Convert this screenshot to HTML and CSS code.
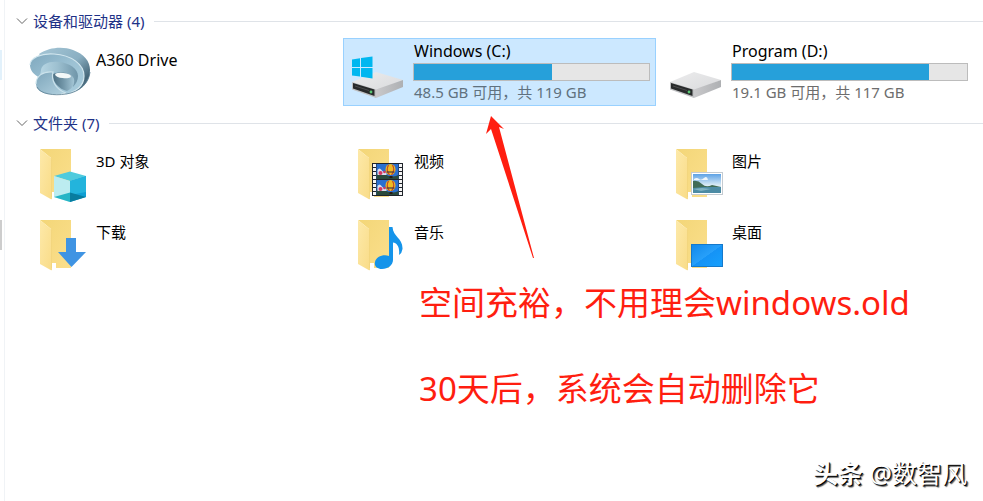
FILE: index.html
```html
<!DOCTYPE html>
<html lang="zh-CN">
<head>
<meta charset="utf-8">
<meta name="viewport" content="width=device-width, initial-scale=1">
<title>此电脑</title>
<link rel="stylesheet" href="styles.css">
</head>
<body>
<svg class="defs" aria-hidden="true">
  <defs>
    <linearGradient id="back" x1="0" y1="0" x2="1" y2="1"><stop offset="0" stop-color="#f3d678"/><stop offset="1" stop-color="#fbdf8c"/></linearGradient>
    <linearGradient id="flap" x1="0" y1="0" x2="1" y2="1"><stop offset="0" stop-color="#fde9a9"/><stop offset="1" stop-color="#f9dc88"/></linearGradient>
    <linearGradient id="metal" x1="0" y1="0" x2="1" y2="0"><stop offset="0" stop-color="#c9c9cb"/><stop offset="1" stop-color="#aeb0b3"/></linearGradient>
    <linearGradient id="lid" x1="0" y1="0" x2="1" y2="1"><stop offset="0" stop-color="#ececed"/><stop offset="1" stop-color="#d9dadc"/></linearGradient>
    <linearGradient id="wall" x1="0" y1="0" x2="1" y2="1"><stop offset="0" stop-color="#a5c6d6"/><stop offset=".5" stop-color="#8aafc2"/><stop offset=".8" stop-color="#456678"/><stop offset="1" stop-color="#6c8fa2"/></linearGradient>
    <linearGradient id="disc" x1="0" y1="0" x2="1" y2="1"><stop offset="0" stop-color="#7fa8be"/><stop offset=".5" stop-color="#9cc1d3"/><stop offset="1" stop-color="#a9cddd"/></linearGradient>
    <linearGradient id="tube" x1="0" y1="0" x2="1" y2="0"><stop offset="0" stop-color="#bcdae7"/><stop offset=".5" stop-color="#9dc0d0"/><stop offset="1" stop-color="#6f95a9"/></linearGradient>
    <linearGradient id="loop" x1="0" y1="0" x2="1" y2="1"><stop offset="0" stop-color="#7ea6bb"/><stop offset="1" stop-color="#b3d2e0"/></linearGradient>
    <linearGradient id="bowl" x1="0" y1="0" x2="1" y2="0"><stop offset="0" stop-color="#4d7083"/><stop offset=".5" stop-color="#7397a9"/><stop offset="1" stop-color="#a4c6d6"/></linearGradient>
    <linearGradient id="screen" x1="0" y1="0" x2="1" y2="1"><stop offset="0" stop-color="#1188ea"/><stop offset=".5" stop-color="#27a0fa"/><stop offset=".51" stop-color="#1593f6"/><stop offset="1" stop-color="#16a0fd"/></linearGradient>
    <linearGradient id="sky" x1="0" y1="0" x2="0" y2="1"><stop offset="0" stop-color="#5da2e6"/><stop offset=".6" stop-color="#dcecf6"/></linearGradient>
    <g id="folder">
      <path d="M15 9H46V57H26V18Z" fill="url(#back)"/>
      <path d="M15 9L26.500 18.500V59.500L15 53Z" fill="url(#flap)"/>
      <path d="M26.500 18.500V59" stroke="#f0d27a" stroke-width=".7"/>
      <path d="M27 52H31V60H27Z" fill="#fff"/>
    </g>
    <g id="disk">
      <path d="M9 44L33 34L60 42L33 53Z" fill="url(#lid)"/>
      <path d="M33 51.500L60 42V49L33 60Z" fill="url(#metal)"/>
      <path d="M9 44L33 51.500V60L9 51.500Z" fill="#bfc0c2"/>
      <path d="M10 45L31.500 51.500V58L10 50.500Z" fill="#282a2b"/>
      <path d="M12 48L26 52.500" stroke="#4b4c4d"/>
      <circle cx="28" cy="54" r="1.400" fill="#58c873"/>
    </g>
    <g id="balloons">
      <rect width="22" height="15" fill="#2a6fd0"/>
      <path d="M0 10Q5 8 10 11T22 11V15H0Z" fill="#2a4a3c"/>
      <path d="M1 6q2-3 4 0t5 2v3H1z" fill="#dbe0f0"/>
      <circle cx="4" cy="9" r="2" fill="#d43860"/>
      <circle cx="8" cy="8" r="1.300" fill="#d43860"/>
      <ellipse cx="14" cy="5.500" rx="5" ry="5.500" fill="#efbb22"/>
      <path d="M12 1Q9 6 13 11M16 1Q19 6 15 11" fill="none" stroke="#c2442a" stroke-width="1.200"/>
      <path d="M10 8H18" stroke="#4a3a40" stroke-width="1.200"/>
      <rect x="13" y="12" width="3" height="2" fill="#281812"/>
    </g>
  </defs>
</svg>

<main class="explorer">
  <span class="rail-mark rail-mark--hover"></span>
  <span class="rail-mark rail-mark--scroll"></span>

  <section class="group">
    <h2 class="group-head">
      <button class="group-toggle" type="button" aria-expanded="true">
        <svg class="chevron" viewBox="0 0 12 8" aria-hidden="true"><path d="M1 1.500L6 6.500L11 1.500"/></svg>
        <span>设备和驱动器 (4)</span>
      </button>
    </h2>
    <div class="tiles">
      <button class="tile" type="button">
        <svg class="tile-icon" viewBox="0 0 70 68" aria-hidden="true">
          <path d="M14 16C24 9 38 8 48 12C59 16 65 23 65 32C65 43 58 52 45 55L30 40Z" fill="url(#wall)"/>
          <path d="M5 27C5 20 16 15 29 16C46 17 59 26 59 38C59 48 51 54 41 56L15 40C8 36 5 32 5 27Z" fill="url(#disc)"/>
          <path d="M12 44C13 40 16 36 16 32C17 26 24 23 34 24C45 25 53 31 53 38C53 42 51 46 48 49C50 41 45 35 36 34C26 33 18 37 12 44Z" fill="url(#tube)"/>
          <path d="M28 36C37 32 47 35 49 41C50 46 47 51 42 53C34 51 27 44 28 36Z" fill="url(#bowl)"/>
          <ellipse cx="38" cy="37.500" rx="8" ry="2.600" fill="#f3f8f8" transform="rotate(7 38 37.500)"/>
          <path d="M11 46C11 38 18 33 28 34C26 42 30 51 41 55C30 58 11 57 11 46Z" fill="url(#loop)"/>
          <path d="M41 56C51 54 59 48 59 38C59 26 46 17 29 16C16 15 5 20 5 27" fill="none" stroke="#d3e7ef" stroke-width="1.200"/>
          <path d="M11 46C11 38 18 33 28 34C26 42 30 51 41 55" fill="none" stroke="#cbe2eb" stroke-width="1.200"/>
          <path d="M12 49C15 56 29 58 41 56C55 54 64 45 65 34" fill="none" stroke="#557b8f" stroke-width=".8"/>
        </svg>
        <span class="tile-body"><span class="tile-name tile-name--drive">A360 Drive</span></span>
      </button>
      <button class="tile tile--drive tile--selected" type="button">
        <svg class="tile-icon" viewBox="0 0 70 68" aria-hidden="true">
          <use href="#disk"/>
          <path d="M9 21.500L17 20.300V29H9ZM18 20.100L29.500 18.500V29H18ZM9 30H17V38.500L9 37.500ZM18 30H29.500V40.500L18 38.700Z" fill="#00b7f0"/>
        </svg>
        <span class="tile-body">
          <span class="tile-name tile-name--drive">Windows (C:)</span>
          <span class="usage"><span class="usage-fill" style="width: 58.700%"></span></span>
          <span class="tile-note">48.5 GB 可用，共 119 GB</span>
        </span>
      </button>
      <button class="tile tile--drive" type="button">
        <svg class="tile-icon" viewBox="0 0 70 68" aria-hidden="true"><use href="#disk"/></svg>
        <span class="tile-body">
          <span class="tile-name tile-name--drive">Program (D:)</span>
          <span class="usage"><span class="usage-fill" style="width: 84%"></span></span>
          <span class="tile-note">19.1 GB 可用，共 117 GB</span>
        </span>
      </button>
    </div>
  </section>

  <section class="group">
    <h2 class="group-head">
      <button class="group-toggle" type="button" aria-expanded="true">
        <svg class="chevron" viewBox="0 0 12 8" aria-hidden="true"><path d="M1 1.500L6 6.500L11 1.500"/></svg>
        <span>文件夹 (7)</span>
      </button>
    </h2>
    <div class="tiles tiles--folders">
      <button class="tile" type="button">
        <svg class="tile-icon" viewBox="0 0 70 68" aria-hidden="true">
          <use href="#folder"/>
          <path d="M29 36L45 31.500L61 36L45 41Z" fill="#4fcbdd"/>
          <path d="M29 36L45 41V62L29 57Z" fill="#bcecf0"/>
          <path d="M45 41L61 36V57L45 62Z" fill="#0f9fd3"/>
          <path d="M45 41L61 36V52L45 55Z" fill="#23b4dc"/>
          <path d="M29 57L45 52.500V62Z" fill="#27b5c6"/>
          <path d="M45 52.500L61 57L45 62Z" fill="#087d9f"/>
        </svg>
        <span class="tile-body"><span class="tile-name">3D 对象</span></span>
      </button>
      <button class="tile" type="button">
        <svg class="tile-icon" viewBox="0 0 70 68" aria-hidden="true">
          <use href="#folder"/>
          <rect x="29" y="23" width="31" height="33" fill="#20242b"/>
          <path d="M31.500 24V56M57.500 24V56" stroke="#f4f4f4" stroke-width="3" stroke-dasharray="3 1"/>
          <use href="#balloons" x="33.500" y="24"/>
          <use href="#balloons" x="33.500" y="40"/>
        </svg>
        <span class="tile-body"><span class="tile-name">视频</span></span>
      </button>
      <button class="tile" type="button">
        <svg class="tile-icon" viewBox="0 0 70 68" aria-hidden="true">
          <use href="#folder"/>
          <rect x="30.500" y="32.500" width="31" height="22" fill="#fff" stroke="#c4cbd1"/>
          <rect x="32" y="34" width="28" height="19" fill="url(#sky)"/>
          <path d="M33 39q3-2 5 0t5-1 4 2H33z" fill="#f0f6fa"/>
          <path d="M32 41Q37 40 41 44T51 45L60 47V48H32Z" fill="#416c57"/>
          <path d="M32 48L43 47H60V53H32Z" fill="#4c8ba4"/>
          <path d="M32 49L41 48L50 49L40 51Z" fill="#80b3c3"/>
        </svg>
        <span class="tile-body"><span class="tile-name">图片</span></span>
      </button>
      <button class="tile" type="button">
        <svg class="tile-icon" viewBox="0 0 70 68" aria-hidden="true">
          <use href="#folder"/>
          <path d="M41 27H51V41H61L46.500 56L33 41H41Z" fill="#3f94e3"/>
        </svg>
        <span class="tile-body"><span class="tile-name">下载</span></span>
      </button>
      <button class="tile" type="button">
        <svg class="tile-icon" viewBox="0 0 70 68" aria-hidden="true">
          <use href="#folder"/>
          <path d="M46 16H49.500C50 26 60 27 59.500 38Q59 42 56 44C57 36 54 32 50 31.500V49C50 54 45 58 39 58C34 58 31 55 32 51C33 46 40 43 46 45Z" fill="#1594ea"/>
        </svg>
        <span class="tile-body"><span class="tile-name">音乐</span></span>
      </button>
      <button class="tile" type="button">
        <svg class="tile-icon" viewBox="0 0 70 68" aria-hidden="true">
          <use href="#folder"/>
          <rect x="30.500" y="33.500" width="31" height="22" fill="url(#screen)" stroke="#1579cb"/>
        </svg>
        <span class="tile-body"><span class="tile-name">桌面</span></span>
      </button>
    </div>
  </section>

  <div class="annotation">
    <svg class="arrow" viewBox="0 0 50 146" aria-hidden="true"><path d="M7 3L20 16L15 14L50 145L49 145L7 16L2 21Z"/></svg>
    <p>空间充裕，不用理会windows.old</p>
    <p>30天后，系统会自动删除它</p>
  </div>

  <div class="watermark"><b>头条</b> @数智风</div>
</main>
</body>
</html>
```
FILE: styles.css
```css
* {
  box-sizing: border-box;
}

body {
  margin: 0;
  background: #fff;
  color: #000;
  font-family: "Noto Sans", "Noto Sans CJK SC", sans-serif;
  font-size: 15px;
  line-height: 20px;
}

button {
  margin: 0;
  padding: 0;
  border: 0;
  background: none;
  color: inherit;
  font: inherit;
  text-align: left;
}

.defs {
  position: absolute;
  width: 0;
  height: 0;
}

.explorer {
  position: relative;
  min-height: 100vh;
  margin-left: 4px;
  padding-top: 8px;
  border-left: 1px solid #f0f3f6;
  overflow: hidden;
}

.rail-mark {
  position: fixed;
  left: 0;
  width: 2px;
  height: 30px;
}

.rail-mark--hover {
  top: 50px;
  background: #e2f1fb;
}

.rail-mark--scroll {
  top: 220px;
  background: #cdcdcd;
}

.group {
  margin-bottom: 4px;
}

.group-head {
  display: flex;
  align-items: center;
  gap: 10px;
  height: 26px;
  margin: 0;
  font-size: 15px;
  font-weight: 400;
}

.group-head::after {
  content: "";
  flex: 1;
  height: 1px;
  background: #dfe3e8;
}

.group-toggle {
  display: flex;
  align-items: center;
  gap: 5px;
  padding-left: 11px;
  color: #1e3287;
}

.chevron {
  width: 12px;
  height: 8px;
  fill: none;
  stroke: #666;
  stroke-width: 1;
}

.tiles {
  display: grid;
  grid-template-columns: repeat(3, 1fr);
  gap: 3px 5px;
  margin-top: 4px;
  padding: 0 9px 0 20px;
}

.tile {
  display: flex;
  align-items: flex-start;
  height: 68px;
}

.tile--selected {
  background: #cce8ff;
  box-shadow: inset 0 0 0 1px #99d1ff;
}

.tile-icon {
  flex: none;
  width: 70px;
  height: 68px;
}

.tile-body {
  display: flex;
  flex: 1;
  flex-direction: column;
  padding: 12px 6px 0 0;
}

.tiles--folders .tile-body {
  padding-top: 11px;
}

.tile--drive .tile-body {
  padding-top: 3px;
}

.tile-name,
.tile-note {
  padding-left: 1px;
}

.tile-name--drive {
  font-size: 16px;
}

.tile-note {
  color: #6d6d6d;
}

.tile--selected .tile-note {
  color: #60717e;
}

.usage {
  height: 18px;
  margin: 2px 0 1px;
  border: 1px solid #bcbcbc;
  background: #e6e6e6;
}

.usage-fill {
  display: block;
  height: 100%;
  background: #26a0da;
}

.annotation {
  position: relative;
  margin-left: 414px;
  color: #ff1e10;
  font-size: 33px;
}

.annotation p {
  margin: 0 0 46px;
  line-height: 40px;
}

.arrow {
  position: absolute;
  left: 65px;
  bottom: 100%;
  width: 50px;
  height: 146px;
  margin-bottom: 24px;
  fill: #ff1e10;
}

.watermark {
  position: absolute;
  right: 16px;
  bottom: 14px;
  color: #fff;
  font-size: 25px;
  line-height: 28px;
  text-shadow: 1px 1px 0 #000, 2px 2px 1px #555;
}
```
